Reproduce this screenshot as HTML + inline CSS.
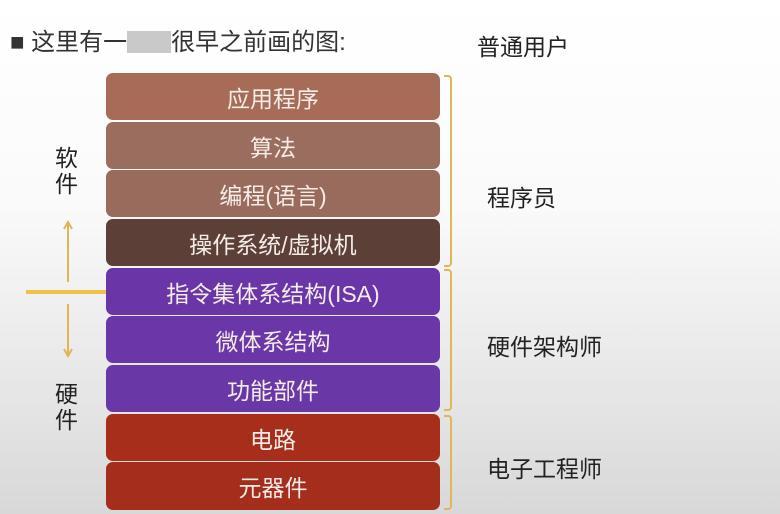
<!DOCTYPE html>
<html><head><meta charset="utf-8"><style>
*{margin:0;padding:0;box-sizing:border-box}
body{width:780px;height:514px;overflow:hidden;position:relative;background:linear-gradient(#ffffff 0%,#fafafa 40%,#e4e4e4 80%,#d8d8d8 100%);font-family:"Liberation Sans","Noto Sans CJK SC",sans-serif;color:#222}
.t{position:absolute;font-size:23px;white-space:nowrap}
.row{position:absolute;left:106px;width:334px;border-radius:7px;color:#f4ece8;font-size:23px;text-align:center;display:flex;align-items:center;justify-content:center}
.br{position:absolute;left:444px;width:8px;border:2px solid #e3b55a;border-left:none;border-radius:0 4px 4px 0}
</style></head><body>
<div class="t" style="left:10px;top:22px;font-size:24px;color:#333">■ 这里有一<span style="display:inline-block;width:44px;height:22px;background:#c9c9c9;vertical-align:-3px"></span>很早之前画的图:</div>
<div class="t" style="left:477px;top:28px">普通用户</div>
<div class="t" style="left:487px;top:179px">程序员</div>
<div class="t" style="left:487px;top:328px">硬件架构师</div>
<div class="t" style="left:487px;top:450px">电子工程师</div>
<div class="t" style="left:55px;top:145px;line-height:26px;width:24px">软<br>件</div>
<div class="t" style="left:55px;top:381px;line-height:26px;width:24px">硬<br>件</div>

<div class="row" style="top:73px;height:47px;background:#a66c57">应用程序</div>
<div class="row" style="top:122px;height:47px;background:#9b6d5e">算法</div>
<div class="row" style="top:170px;height:47px;background:#986b5c">编程(语言)</div>
<div class="row" style="top:219px;height:47px;background:#5c3f36">操作系统/虚拟机</div>
<div class="row" style="top:268px;height:47px;background:#6a35a6">指令集体系结构(ISA)</div>
<div class="row" style="top:316px;height:47px;background:#6b36a8">微体系结构</div>
<div class="row" style="top:365px;height:47px;background:#6a37a6">功能部件</div>
<div class="row" style="top:414px;height:47px;background:#a82e1c">电路</div>
<div class="row" style="top:462px;height:48px;background:#a52d1c">元器件</div>

<div class="br" style="top:75px;height:192px"></div>
<div class="br" style="top:269px;height:142px"></div>
<div class="br" style="top:415px;height:95px"></div>

<div style="position:absolute;left:26px;top:290px;width:80px;height:4px;background:#ecc24a"></div>
<svg style="position:absolute;left:58px;top:218px" width="20" height="140" viewBox="0 0 20 140">
<g stroke="#e0b458" stroke-width="2" fill="none">
<line x1="10" y1="6" x2="10" y2="64"/><polyline points="6,11 10,4 14,11"/>
<line x1="10" y1="86" x2="10" y2="136"/><polyline points="6,131 10,138 14,131"/>
</g></svg>
</body></html>
